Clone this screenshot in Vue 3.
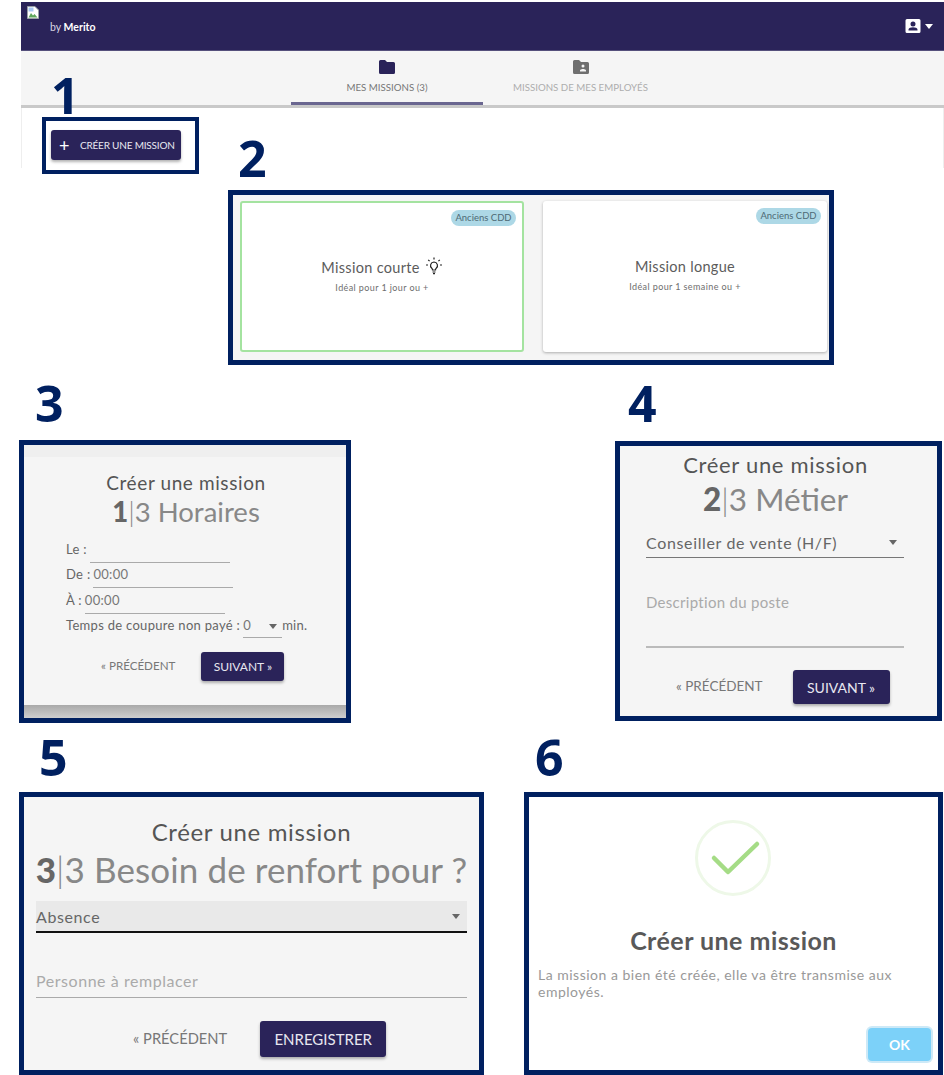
<script setup>
const cards = [
  { title: "Mission courte", sub: "Idéal pour 1 jour ou +", active: true },
  { title: "Mission longue", sub: "Idéal pour 1 semaine ou +", active: false }
];
</script>

<template>
  <div class="page">
    <!-- 1 : haut de l'appli -->
    <div class="app">
      <div class="topbar">
        <div class="brand">
          <svg class="broken" width="12" height="13" viewBox="0 0 12 13">
            <path d="M0.5 0.5H8L11.5 4V12.5H0.5Z" fill="#fff" stroke="#9aa0a6" />
            <path d="M1.5 11.5L4 7L6 9.5L7.5 8L10.5 11.5Z" fill="#5fa75c" />
            <rect x="1.5" y="1.5" width="5" height="4" fill="#a9c8f2" />
          </svg>
          <span class="by">by <b>Merito</b></span>
        </div>
        <div class="user">
          <svg width="16" height="16" viewBox="0 0 16 16">
            <path fill="#fff" fill-rule="evenodd" d="M2 1H14A1.5 1.5 0 0 1 15.500 2.500V13.500A1.500 1.500 0 0 1 14 15H2A1.500 1.500 0 0 1 .5 13.500V2.500A1.500 1.500 0 0 1 2 1ZM8 3.500A2.500 2.500 0 1 0 8 8.500A2.500 2.500 0 1 0 8 3.500ZM3.500 12.500H12.500V11.500C12.500 10 10 9.200 8 9.200S3.500 10 3.500 11.500Z" />
          </svg>
          <span class="caret white"></span>
        </div>
      </div>
      <div class="tabs">
        <div class="tab on">
          <svg width="16" height="14" viewBox="0 0 16 14">
            <path fill="#2a2359" d="M1.500 0H6L8 2H14.500A1.500 1.500 0 0 1 16 3.500V12.500A1.500 1.500 0 0 1 14.500 14H1.500A1.500 1.500 0 0 1 0 12.500V1.500A1.500 1.500 0 0 1 1.500 0Z" />
          </svg>
          <span>MES MISSIONS (3)</span>
        </div>
        <div class="tab">
          <svg width="16" height="14" viewBox="0 0 16 14">
            <path fill="#6f6f6f" fill-rule="evenodd" d="M1.500 0H6L8 2H14.500A1.500 1.500 0 0 1 16 3.500V12.500A1.500 1.500 0 0 1 14.500 14H1.500A1.500 1.500 0 0 1 0 12.500V1.500A1.500 1.500 0 0 1 1.500 0ZM10 4.500A1.500 1.500 0 1 0 10 7.500A1.500 1.500 0 1 0 10 4.500ZM7 11.500H13V10.500C13 9.500 11.200 9 10 9S7 9.500 7 10.500Z" />
          </svg>
          <span>MISSIONS DE MES EMPLOYÉS</span>
        </div>
      </div>
      <div class="content">
        <div class="frame-btn">
          <button class="dark create"><span class="plus">+</span>CRÉER UNE MISSION</button>
        </div>
      </div>
      <div class="num n1">1</div>
    </div>

    <!-- 2 : choix du type de mission -->
    <div class="row-two">
      <div class="num n2">2</div>
      <div class="panel p2">
        <div v-for="c in cards" :key="c.title" class="card" :class="{ active: c.active }">
          <span class="badge">Anciens CDD</span>
          <div class="card-title">
            <span>{{ c.title }}</span>
            <svg v-if="c.active" width="18" height="18" viewBox="0 0 18 18" fill="none" stroke="#222" stroke-width="1.200">
              <path d="M9 5A3.500 3.500 0 0 0 6.800 11.200C7.500 11.800 7.500 12.500 7.500 13H10.500C10.500 12.500 10.500 11.800 11.200 11.200A3.500 3.500 0 0 0 9 5Z" />
              <path d="M7.500 15H10.500M8 16.700H10M9 .5V2.500M3.200 2.800L4.600 4.200M14.800 2.800L13.400 4.200M1 8H3M15 8H17" />
            </svg>
          </div>
          <div class="card-sub">{{ c.sub }}</div>
        </div>
      </div>
    </div>

    <!-- 3 et 4 -->
    <div class="row r34">
      <div class="col">
        <div class="num n3">3</div>
        <div class="panel p3">
          <div class="strip"></div>
          <h2 class="t3">Créer une mission</h2>
          <div class="step s3"><b>1</b><i>|</i>3 Horaires</div>
          <div class="fields">
            <div class="field">Le :<span class="line"></span></div>
            <div class="field">De :<span class="line">00:00</span></div>
            <div class="field">À :<span class="line">00:00</span></div>
            <div class="field">Temps de coupure non payé :<span class="line sel">0<span class="caret"></span></span><span class="min">min.</span></div>
          </div>
          <div class="actions a3">
            <span class="prev">« PRÉCÉDENT</span>
            <button class="dark next">SUIVANT »</button>
          </div>
          <div class="shade"></div>
        </div>
      </div>
      <div class="col">
        <div class="num n4">4</div>
        <div class="panel p4">
          <h2 class="t4">Créer une mission</h2>
          <div class="step s4"><b>2</b><i>|</i>3 Métier</div>
          <div class="big-select">Conseiller de vente (H/F)<span class="caret"></span></div>
          <div class="area">Description du poste</div>
          <div class="actions a4">
            <span class="prev">« PRÉCÉDENT</span>
            <button class="dark next">SUIVANT »</button>
          </div>
        </div>
      </div>
    </div>

    <!-- 5 et 6 -->
    <div class="row r56">
      <div class="col">
        <div class="num n5">5</div>
        <div class="panel p5">
          <h2 class="t5">Créer une mission</h2>
          <div class="step s5"><b>3</b><i>|</i>3 Besoin de renfort pour ?</div>
          <div class="focus-select">Absence<span class="caret"></span></div>
          <div class="replace">Personne à remplacer</div>
          <div class="actions a5">
            <span class="prev">« PRÉCÉDENT</span>
            <button class="dark save">ENREGISTRER</button>
          </div>
        </div>
      </div>
      <div class="col">
        <div class="num n6">6</div>
        <div class="panel p6">
          <div class="ring">
            <svg width="76" height="76" viewBox="0 0 76 76" fill="none">
              <path d="M19 38L33 52L62 24" stroke="#a5dc86" stroke-width="4.500" stroke-linecap="round" stroke-linejoin="round" />
            </svg>
          </div>
          <h2 class="t6">Créer une mission</h2>
          <p class="msg">La mission a bien été créée, elle va être transmise aux employés.</p>
          <button class="ok">OK</button>
        </div>
      </div>
    </div>
  </div>
</template>

<style>
html, body {
  margin: 0;
  background: #fff;
}
</style>

<style scoped>
.page {
  width: 944px;
  height: 1075px;
  overflow: hidden;
  padding-top: 2px;
  box-sizing: border-box;
  font-family: Lato, "Open Sans", sans-serif;
  color: #555;
}
.num {
  font-family: "Open Sans", sans-serif;
  font-weight: 700;
  font-size: 50px;
  line-height: 50px;
  color: #002060;
}
.app {
  position: relative;
  margin-left: 21px;
  height: 166px;
}
.topbar {
  height: 48px;
  background: #2a2359;
  border-bottom: 1px solid #55507c;
  display: flex;
  justify-content: space-between;
  color: #fff;
}
.brand {
  position: relative;
  padding: 18px 0 0 29px;
  font-size: 10.500px;
  line-height: 14px;
  color: #d8d6e4;
}
.brand b {
  color: #fff;
}
.broken {
  position: absolute;
  left: 6px;
  top: 4px;
}
.user {
  display: flex;
  align-items: center;
  gap: 4px;
  padding-right: 11px;
}
.caret {
  display: inline-block;
  width: 0;
  height: 0;
  border: 4px solid transparent;
  border-top: 5px solid #666;
  border-bottom: 0;
}
.caret.white {
  border-top-color: #fff;
}
.tabs {
  height: 54px;
  background: #f5f5f5;
  border-bottom: 3px solid #c9c9c9;
  display: flex;
  padding-left: 270px;
}
.tab {
  width: 192px;
  height: 54px;
  box-sizing: border-box;
  display: flex;
  flex-direction: column;
  align-items: center;
  padding-top: 9px;
  gap: 6px;
  font-size: 9.700px;
  line-height: 14px;
  color: #adadad;
}
.tab.on {
  color: #777;
  border-bottom: 3px solid #6a6690;
}
.tab + .tab {
  width: 195px;
}
.content {
  height: 60px;
  box-sizing: border-box;
  background: #fff;
  border-left: 1px solid #eee;
  border-right: 1px solid #eee;
  padding: 9px 0 0 20px;
}
.frame-btn {
  display: inline-block;
  border: 4px solid #002060;
  padding: 9px 14px 9px 5px;
  height: 57px;
  box-sizing: border-box;
  background: #fff;
  position: relative;
}
.dark {
  background: #2a2359;
  color: #e8e7f0;
  border: 0;
  border-radius: 3px;
  box-shadow: 0 2px 3px rgba(0, 0, 0, 0.3);
  font-family: Lato, sans-serif;
  padding: 0;
}
.create {
  width: 130px;
  height: 30px;
  font-size: 10px;
  display: flex;
  align-items: center;
  padding-left: 8px;
  box-sizing: border-box;
  letter-spacing: -0.2px;
}
.plus {
  font-size: 18px;
  line-height: 18px;
  width: 21px;
  text-align: left;
  color: #fff;
}
.n1 {
  position: absolute;
  left: 30px;
  top: 68px;
}
.row-two {
  position: relative;
  margin: 22px 0 0 228px;
}
.n2 {
  position: absolute;
  left: 10px;
  top: -57px;
}
.panel {
  border: 5px solid #002060;
  box-sizing: border-box;
  background: #f5f5f5;
  position: relative;
}
.p2 {
  width: 606px;
  height: 175px;
  display: flex;
  gap: 19px;
  padding: 6px 0 0 7px;
}
.card {
  width: 284px;
  height: 151px;
  background: #fff;
  border-radius: 3px;
  box-shadow: 0 1px 3px rgba(0, 0, 0, 0.3);
  position: relative;
  box-sizing: border-box;
  text-align: center;
  padding-top: 55px;
}
.card.active {
  border: 2px solid #a4e3a0;
  padding-top: 54px;
  box-shadow: none;
}
.badge {
  position: absolute;
  top: 7px;
  right: 6px;
  width: 65px;
  height: 16px;
  line-height: 16px;
  border-radius: 8px;
  background: #add8e6;
  font-size: 9.500px;
  color: #4d6a75;
}
.card-title {
  display: flex;
  justify-content: center;
  align-items: flex-start;
  gap: 5px;
  font-size: 14.500px;
  line-height: 22px;
  color: #5c5c5c;
  letter-spacing: 0.3px;
}
.card-sub {
  font-size: 9px;
  line-height: 12px;
  margin-top: 3px;
  color: #6e6e6e;
  letter-spacing: 0.4px;
}
.row {
  display: flex;
  justify-content: space-between;
}
.r34 {
  padding: 0 2px 0 19px;
}
.r34 .num {
  height: 75px;
  padding-top: 10px;
  box-sizing: border-box;
  line-height: 56px;
}
.n3 {
  padding-left: 16px;
}
.n4 {
  padding-left: 13px;
}
.p3 {
  width: 332px;
  height: 283px;
  text-align: center;
}
.strip {
  height: 12px;
  background: #efefef;
}
h2 {
  margin: 0;
  font-weight: 400;
  color: #555;
}
.t3 {
  font-size: 19px;
  line-height: 24px;
  margin-top: 14px;
  padding-left: 2px;
  letter-spacing: 0.6px;
}
.step {
  color: #888;
  font-weight: 400;
  white-space: nowrap;
}
.step b {
  color: #666;
  font-weight: 900;
}
.step i {
  font-style: normal;
  font-weight: 300;
}
.s3 {
  font-size: 27.500px;
  line-height: 34px;
  padding-left: 2px;
}
.fields {
  padding-left: 42px;
  margin-top: 12px;
  text-align: left;
}
.field {
  display: flex;
  height: 25.300px;
  align-items: flex-start;
  gap: 3px;
  font-size: 13px;
  line-height: 17px;
  color: #666;
  letter-spacing: 0.3px;
}
.line {
  display: inline-block;
  width: 140px;
  height: 21px;
  border-bottom: 1px solid #aaa;
  color: #777;
}
.sel {
  display: inline-flex;
  width: 39px;
  justify-content: space-between;
  align-items: flex-start;
  padding-right: 5px;
  box-sizing: border-box;
}
.sel .caret {
  margin-top: 7px;
}
.min {
  margin-left: -3px;
}
.actions {
  display: flex;
  align-items: center;
}
.prev {
  color: #777;
  white-space: nowrap;
  padding-bottom: 3px;
}
.a3 {
  margin-top: 10px;
  padding-left: 77px;
  font-size: 11.600px;
}
.next {
  font-size: 12px;
  width: 83px;
  height: 29px;
}
.a3 .next {
  margin-left: 26px;
}
.shade {
  position: absolute;
  left: 0;
  right: 0;
  bottom: 0;
  height: 13px;
  background: linear-gradient(#a9a9a9, #cfcfcf);
}
.p4 {
  width: 327px;
  height: 280px;
  margin-top: 1px;
  text-align: center;
}
.t4 {
  font-size: 22px;
  line-height: 26px;
  padding: 6px 6px 0 0;
  letter-spacing: 0.7px;
}
.s4 {
  font-size: 31.500px;
  line-height: 38px;
  padding: 2px 6px 0 0;
}
.big-select {
  margin: 2px 33px 0 26px;
  height: 38px;
  padding-top: 8px;
  line-height: 24px;
  font-size: 16px;
  text-align: left;
  color: #666;
  border-bottom: 1px solid #777;
  display: flex;
  justify-content: space-between;
  align-items: center;
  padding-right: 7px;
  box-sizing: border-box;
  letter-spacing: 0.65px;
}
.area {
  margin: 0 33px 0 26px;
  height: 90px;
  box-sizing: border-box;
  padding-top: 32px;
  font-size: 15px;
  line-height: 24px;
  text-align: left;
  color: #aaa;
  border-bottom: 2px solid #bbb;
  letter-spacing: 0.3px;
}
.a4 {
  margin-top: 22px;
  padding-left: 56px;
  font-size: 13.500px;
}
.a4 .next {
  width: 97px;
  height: 34px;
  font-size: 14px;
  margin-left: 30px;
}
.r56 {
  padding: 0 1px 0 19px;
  margin-top: -1px;
}
.r56 .num {
  height: 70px;
  padding-top: 7px;
  box-sizing: border-box;
  line-height: 56px;
}
.n5 {
  padding-left: 20px;
}
.n6 {
  padding-left: 11px;
}
.p5 {
  width: 465px;
  height: 283px;
  text-align: center;
}
.t5 {
  font-size: 24px;
  line-height: 28px;
  padding-top: 21px;
  letter-spacing: 0.65px;
}
.s5 {
  font-size: 35px;
  line-height: 44px;
  padding-top: 1px;
  letter-spacing: 0.1px;
}
.focus-select {
  margin: 10px 12px 0;
  height: 32px;
  box-sizing: border-box;
  background: #e9e9e9;
  border-bottom: 2px solid #111;
  display: flex;
  justify-content: space-between;
  align-items: center;
  font-size: 16px;
  padding-right: 7px;
  color: #666;
  letter-spacing: 0.6px;
}
.replace {
  margin: 0 12px;
  height: 65px;
  box-sizing: border-box;
  padding-top: 36px;
  font-size: 16px;
  line-height: 24px;
  text-align: left;
  color: #aaa;
  border-bottom: 1px solid #aaa;
  letter-spacing: 0.55px;
}
.a5 {
  margin-top: 23px;
  padding-left: 109px;
  font-size: 14.700px;
}
.save {
  width: 126px;
  height: 36px;
  font-size: 15px;
  margin-left: 33px;
}
.p6 {
  width: 419px;
  height: 283px;
  background: #fff;
  text-align: center;
}
.ring {
  width: 76px;
  height: 76px;
  border: 3px solid #eef8e8;
  border-radius: 50%;
  box-sizing: border-box;
  margin: 23px auto 0 166px;
  position: relative;
}
.ring svg {
  position: absolute;
  left: -3px;
  top: -3px;
}
.t6 {
  font-size: 25px;
  line-height: 30px;
  font-weight: 700;
  margin-top: 29px;
  color: #595959;
  letter-spacing: 0.47px;
}
.msg {
  margin: 11px 30px 0 9px;
  text-align: left;
  font-size: 14px;
  line-height: 17px;
  color: #999;
  letter-spacing: 0.5px;
}
.ok {
  position: absolute;
  right: 7px;
  bottom: 9px;
  width: 63px;
  height: 33px;
  border: 0;
  border-radius: 4px;
  background: #7cd1f9;
  box-shadow: 0 0 0 2px #cde9f7;
  color: #fff;
  font-family: Lato, sans-serif;
  font-weight: 700;
  font-size: 14px;
}
</style>
